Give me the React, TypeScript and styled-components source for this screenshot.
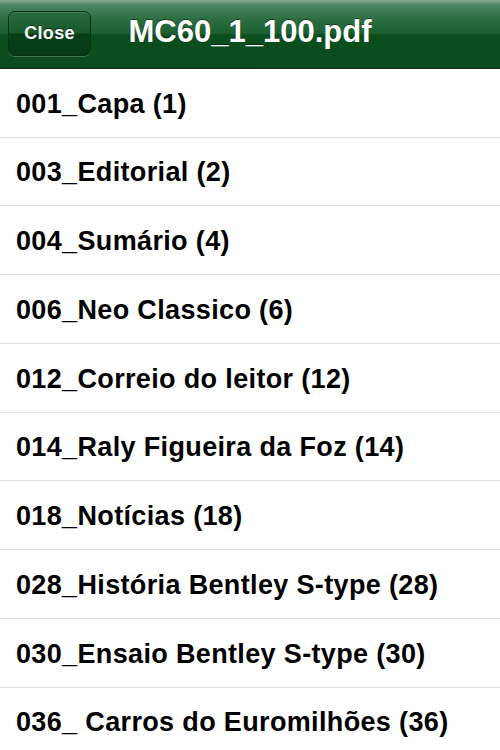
import React from "react";
import styled, { createGlobalStyle } from "styled-components";

const Global = createGlobalStyle`
  html, body { margin: 0; padding: 0; background: #ffffff; }
  body { font-family: "Liberation Sans", Arial, sans-serif; -webkit-font-smoothing: antialiased; }
`;

const Screen = styled.div`
  width: 500px;
  height: 750px;
  overflow: hidden;
  display: flex;
  flex-direction: column;
  background: #ffffff;
`;

const NavBar = styled.header`
  position: relative;
  flex: 0 0 auto;
  box-sizing: border-box;
  height: 68.75px;
  padding-bottom: 4px;
  border-bottom: 1px solid #1a2a1e;
  display: flex;
  align-items: center;
  justify-content: center;
  background: linear-gradient(
    to bottom,
    #84aa90 0%,
    #4d8560 8%,
    #2c6e42 28%,
    #1a5e30 50%,
    #0b4e1d 51%,
    #0a4c1b 100%
  );
`;

const CloseButton = styled.button`
  position: absolute;
  left: 8px;
  top: 11px;
  width: 83px;
  height: 45px;
  border-radius: 7px;
  border: 1px solid #0a2f14;
  box-shadow: 0 1px 0 rgba(255, 255, 255, 0.22), inset 0 1px 0 rgba(255, 255, 255, 0.12);
  background: linear-gradient(to bottom, #2a6a3c 0%, #195a2c 48%, #063f17 52%, #053a15 100%);
  color: #ffffff;
  font-family: "Liberation Sans", Arial, sans-serif;
  font-weight: bold;
  font-size: 18px;
  letter-spacing: 0.3px;
  text-shadow: 0 -1px 0 rgba(0, 0, 0, 0.5);
  padding: 0;
  cursor: pointer;
`;

const Title = styled.h1`
  margin: 0;
  color: #ffffff;
  font-family: "Liberation Sans", Arial, sans-serif;
  font-weight: bold;
  font-size: 31px;
  text-shadow: 0 -1px 0 rgba(0, 0, 0, 0.45);
  letter-spacing: 0;
`;

const List = styled.ul`
  list-style: none;
  margin: 0;
  padding: 0;
  flex: 1 1 auto;
`;

const Row = styled.li`
  box-sizing: border-box;
  height: 68.75px;
  border-bottom: 1px solid #e0e0e0;
  display: flex;
  align-items: center;
  padding: 3px 0 0 16px;
  font-family: "Liberation Sans", Arial, sans-serif;
  font-weight: bold;
  font-size: 27px;
  letter-spacing: 0.35px;
  color: #000000;
  white-space: nowrap;
`;

const items = [
  "001_Capa (1)",
  "003_Editorial (2)",
  "004_Sumário (4)",
  "006_Neo Classico (6)",
  "012_Correio do leitor (12)",
  "014_Raly Figueira da Foz (14)",
  "018_Notícias (18)",
  "028_História Bentley S-type (28)",
  "030_Ensaio Bentley S-type (30)",
  "036_ Carros do Euromilhões (36)",
];

export default function App() {
  return (
    <Screen>
      <Global />
      <NavBar>
        <CloseButton>Close</CloseButton>
        <Title>MC60_1_100.pdf</Title>
      </NavBar>
      <List>
        {items.map((t) => (
          <Row key={t}>{t}</Row>
        ))}
      </List>
    </Screen>
  );
}
